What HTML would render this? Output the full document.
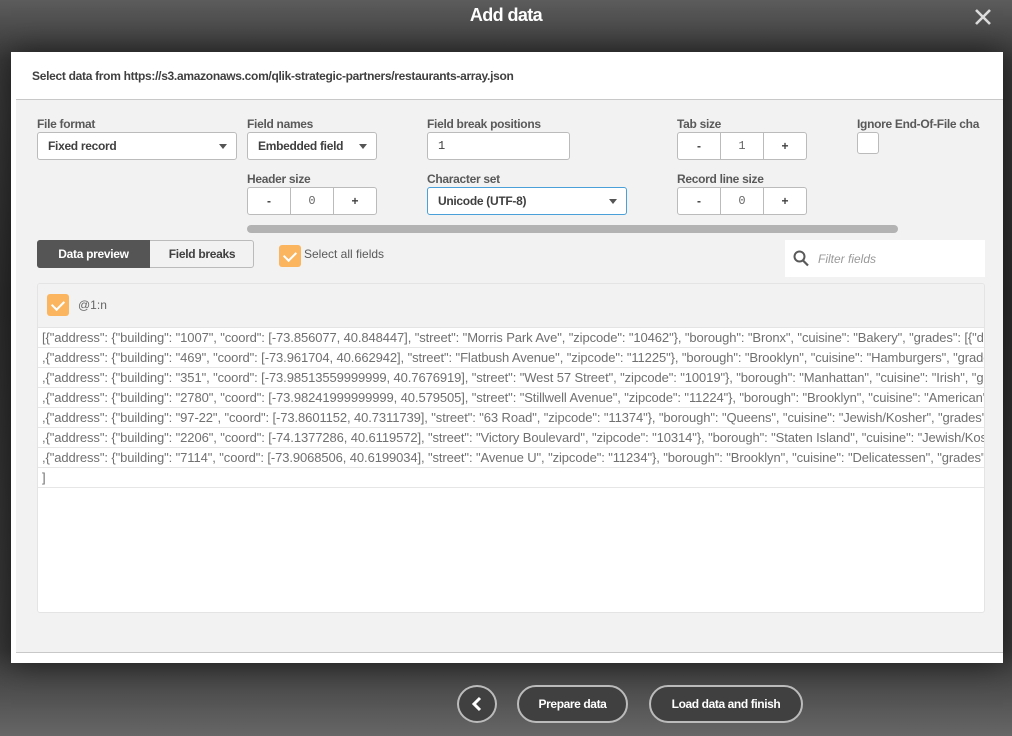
<!DOCTYPE html>
<html><head><meta charset="utf-8"><style>
*{box-sizing:border-box;margin:0;padding:0}
body{width:1012px;height:736px;overflow:hidden;font-family:"Liberation Sans",sans-serif;background:linear-gradient(#5c5c5c 0,#3a3a3a 60px,#2e2e2e 300px,#3a3a3a 650px,#666 736px);position:relative;color:#595959}
.title{position:absolute;top:5px;left:0;width:1012px;text-align:center;color:#fff;font-weight:bold;font-size:18px;letter-spacing:-0.6px}
.x{position:absolute;left:974px;top:8px;width:18px;height:18px}
.modal{position:absolute;left:11px;top:52px;width:992px;height:611px;background:#fff;box-shadow:0 0 30px rgba(0,0,0,.6)}
.hdr{position:absolute;left:21px;top:17px;font-size:12px;font-weight:bold;color:#404040;letter-spacing:-0.3px}
.body{position:absolute;left:5px;top:47px;width:987px;height:554px;background:#f2f2f2;border-top:1px solid #c8c8c8;border-bottom:1px solid #c8c8c8;overflow:hidden}
.lbl{position:absolute;font-size:12px;font-weight:bold;color:#595959;letter-spacing:-0.3px;white-space:nowrap}
.box{position:absolute;background:#fff;border:1px solid #bbb;border-radius:3px;height:28px;font-size:12px;font-weight:bold;color:#404040;line-height:26px;padding-left:10px;letter-spacing:-0.3px}
.caret{position:absolute;right:9px;top:11px;width:0;height:0;border-left:4px solid transparent;border-right:4px solid transparent;border-top:5px solid #555}
.step{position:absolute;height:28px;width:130px;background:#fff;border:1px solid #bbb;border-radius:3px;display:flex;font-size:12px}
.step div{flex:1;text-align:center;line-height:26px;font-weight:bold;color:#404040}
.step div+div{border-left:1px solid #bbb}
.step .v{font-family:"Liberation Mono",monospace;font-weight:normal;color:#666}
.chk{position:absolute;width:22px;height:22px;background:#fbb55f;border-radius:3px}
.chk:after{content:"";position:absolute;left:5px;top:6px;width:10px;height:6px;border-left:2.5px solid #fff;border-bottom:2.5px solid #fff;transform:rotate(-45deg)}
.grid{position:absolute;left:21px;top:183px;width:948px;height:330px;background:#fff;border:1px solid #e4e4e4;border-radius:3px;overflow:hidden}
.gh{height:44px;background:#f2f2f2;border-bottom:1px solid #e4e4e4;position:relative}
.row{height:20px;border-bottom:1px solid #e6e6e6;font-size:13px;line-height:19px;padding-left:4px;white-space:nowrap;overflow:hidden;color:#707070;letter-spacing:-0.1px}
.btn{position:absolute;top:685px;height:38px;border:2px solid #bbb;border-radius:19px;background:#404040;color:#fff;font-weight:bold;font-size:12px;text-align:center;line-height:34px;letter-spacing:-0.4px}
</style></head><body>
<div class="title">Add data</div>
<svg class="x" viewBox="0 0 18 18"><path d="M2 2L16 16M16 2L2 16" stroke="#ddd" stroke-width="2.6"/></svg>
<div class="modal">
<div class="hdr">Select data from https://s3.amazonaws.com/qlik-strategic-partners/restaurants-array.json</div>
<div class="body">
<div class="lbl" style="left:21px;top:17px">File format</div>
<div class="box" style="left:21px;top:32px;width:200px">Fixed record<span class="caret"></span></div>
<div class="lbl" style="left:231px;top:17px">Field names</div>
<div class="box" style="left:231px;top:32px;width:130px">Embedded field<span class="caret"></span></div>
<div class="lbl" style="left:411px;top:17px">Field break positions</div>
<div class="box" style="left:411px;top:32px;width:143px;font-weight:normal;font-family:'Liberation Mono',monospace">1</div>
<div class="lbl" style="left:661px;top:17px">Tab size</div>
<div class="step" style="left:661px;top:32px"><div>-</div><div class="v">1</div><div>+</div></div>
<div class="lbl" style="left:841px;top:17px">Ignore End-Of-File cha</div>
<div style="position:absolute;left:841px;top:32px;width:22px;height:22px;background:#fff;border:1px solid #bbb;border-radius:3px"></div>
<div class="lbl" style="left:231px;top:72px">Header size</div>
<div class="step" style="left:231px;top:87px"><div>-</div><div class="v">0</div><div>+</div></div>
<div class="lbl" style="left:411px;top:72px">Character set</div>
<div class="box" style="left:411px;top:87px;width:200px;border-color:#4aa0d8">Unicode (UTF-8)<span class="caret"></span></div>
<div class="lbl" style="left:661px;top:72px">Record line size</div>
<div class="step" style="left:661px;top:87px"><div>-</div><div class="v">0</div><div>+</div></div>
<div style="position:absolute;left:231px;top:125px;width:651px;height:8px;background:#b3b3b3;border-radius:4px"></div>
<div style="position:absolute;left:21px;top:140px;width:217px;height:28px;border:1px solid #bbb;border-radius:3px;background:#f2f2f2;font-size:12px;font-weight:bold;line-height:26px;letter-spacing:-0.3px">
<span style="position:absolute;left:-1px;top:-1px;width:113px;height:28px;background:#555;color:#fff;text-align:center;border-radius:3px 0 0 3px;line-height:28px">Data preview</span>
<span style="position:absolute;left:112px;width:104px;text-align:center;color:#404040">Field breaks</span></div>
<div class="chk" style="left:263px;top:145px"></div>
<div style="position:absolute;left:288px;top:147px;font-size:12px;color:#595959">Select all fields</div>
<div style="position:absolute;left:769px;top:140px;width:200px;height:37px;background:#fff">
<svg style="position:absolute;left:8px;top:10px" width="16" height="17" viewBox="0 0 16 17"><circle cx="6.5" cy="6.5" r="5" fill="none" stroke="#595959" stroke-width="2"/><path d="M10 10.5L15 15.5" stroke="#595959" stroke-width="2.2"/></svg>
<span style="position:absolute;left:33px;top:12px;font-size:12px;font-style:italic;color:#999">Filter fields</span></div>
<div class="grid"><div class="gh"><div class="chk" style="left:9px;top:10px"></div><span style="position:absolute;left:40px;top:14px;font-size:12px;color:#666">@1:n</span></div>
<div class="row">[{"address": {"building": "1007", "coord": [-73.856077, 40.848447], "street": "Morris Park Ave", "zipcode": "10462"}, "borough": "Bronx", "cuisine": "Bakery", "grades": [{"date"</div>
<div class="row">,{"address": {"building": "469", "coord": [-73.961704, 40.662942], "street": "Flatbush Avenue", "zipcode": "11225"}, "borough": "Brooklyn", "cuisine": "Hamburgers", "grades"</div>
<div class="row">,{"address": {"building": "351", "coord": [-73.98513559999999, 40.7676919], "street": "West 57 Street", "zipcode": "10019"}, "borough": "Manhattan", "cuisine": "Irish", "grades"</div>
<div class="row">,{"address": {"building": "2780", "coord": [-73.98241999999999, 40.579505], "street": "Stillwell Avenue", "zipcode": "11224"}, "borough": "Brooklyn", "cuisine": "American"</div>
<div class="row">,{"address": {"building": "97-22", "coord": [-73.8601152, 40.7311739], "street": "63 Road", "zipcode": "11374"}, "borough": "Queens", "cuisine": "Jewish/Kosher", "grades"</div>
<div class="row">,{"address": {"building": "2206", "coord": [-74.1377286, 40.6119572], "street": "Victory Boulevard", "zipcode": "10314"}, "borough": "Staten Island", "cuisine": "Jewish/Kosher"</div>
<div class="row">,{"address": {"building": "7114", "coord": [-73.9068506, 40.6199034], "street": "Avenue U", "zipcode": "11234"}, "borough": "Brooklyn", "cuisine": "Delicatessen", "grades"</div>
<div class="row">]</div>
</div>
</div>
</div>
<div class="btn" style="left:457px;width:40px;border-radius:50%"><svg width="36" height="34" viewBox="0 0 36 34"><path d="M21 11L15 17L21 23" fill="none" stroke="#fff" stroke-width="3"/></svg></div>
<div class="btn" style="left:517px;width:111px">Prepare data</div>
<div class="btn" style="left:649px;width:154px">Load data and finish</div>
</body></html>
